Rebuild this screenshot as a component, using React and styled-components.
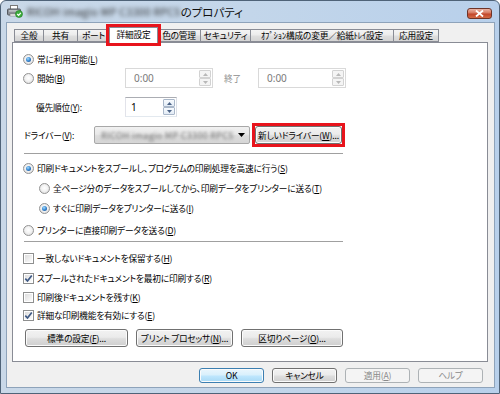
import React from 'react';
import styled, { createGlobalStyle } from 'styled-components';

const Global = createGlobalStyle`
  html, body { margin: 0; padding: 0; background: #fff; }
  body {
    font-family: "Noto Sans CJK JP", "Noto Sans", sans-serif;
    font-size: 8.7px;
    letter-spacing: -0.2px;
    color: #000;
    font-feature-settings: "palt";
  }
  * { box-sizing: border-box; }
  u { text-underline-offset: 1px; }
`;

const Window = styled.div`
  width: 500px;
  height: 394px;
  display: flex;
  flex-direction: column;
  background: linear-gradient(90deg, #c9d8e8 0%, #c3d6ea 50%, #b8d0eb 100%);
  border: 1px solid #4f6378;
  border-radius: 6px 6px 0 0;
  overflow: hidden;
`;

const TitleBar = styled.div`
  height: 21px;
  flex: none;
  display: flex;
  align-items: center;
  padding: 0 7px 0 6px;
`;

const TitleText = styled.div`
  flex: 1;
  margin-left: 4px;
  display: flex;
  align-items: center;
  white-space: nowrap;
  font-size: 11.5px;
  letter-spacing: 0;
  color: #111;
`;

const Blurred = styled.span`
  display: inline-block;
  filter: blur(${(p) => p.$blur || 1.8}px);
  color: ${(p) => p.$color || '#2a2a2a'};
  font-size: ${(p) => p.$size || 11}px;
  letter-spacing: ${(p) => p.$ls || 0}px;
  white-space: nowrap;
`;

const CloseBtn = styled.div`
  align-self: flex-start;
  margin-top: 7px;
  width: 25px;
  height: 11px;
  border: 1px solid #6e3428;
  border-radius: 3px;
  background: linear-gradient(180deg, #eab4a6 0%, #d6785f 45%, #c2452a 55%, #d36a45 100%);
  display: flex;
  align-items: center;
  justify-content: center;
`;

const Client = styled.div`
  flex: 1;
  margin: 0 4px 5px 5px;
  background: #f0f0f0;
  border: 1px solid #8ea3ba;
  display: flex;
  flex-direction: column;
  padding: 4px 6px 0 5px;
`;

const TabStrip = styled.div`
  height: 15px;
  flex: none;
  display: flex;
  align-items: flex-end;
  padding-left: 2px;
`;

const Tab = styled.div`
  width: ${(p) => p.$w}px;
  height: ${(p) => (p.$active ? 16 : 13)}px;
  margin-left: -1px;
  margin-bottom: ${(p) => (p.$active ? -1 : 0)}px;
  border: 1px solid #898c95;
  border-bottom: ${(p) => (p.$active ? 'none' : '1px solid #898c95')};
  background: ${(p) =>
    p.$active ? '#fff' : 'linear-gradient(180deg, #f4f4f4 0%, #ececec 45%, #dedede 55%, #d4d4d4 100%)'};
  display: flex;
  align-items: center;
  justify-content: center;
  padding-bottom: ${(p) => (p.$active ? 2 : 0)}px;
  white-space: nowrap;
  position: ${(p) => (p.$active ? 'relative' : 'static')};
  z-index: ${(p) => (p.$active ? 2 : 'auto')};
  &:first-child { margin-left: 0; }
  ${(p) =>
    p.$highlight &&
    `&::after {
      content: '';
      position: absolute;
      left: -4px; right: -4px; top: -4px; bottom: -3px;
      border: 3px solid #e8141c;
    }`}
`;

const Panel = styled.div`
  height: 320px;
  flex: none;
  background: #fff;
  border: 1px solid #898c95;
  display: flex;
  flex-direction: column;
  padding-top: 8px;
`;

const Row = styled.div`
  flex: none;
  display: flex;
  align-items: center;
  height: ${(p) => p.$h || 18}px;
  margin-top: ${(p) => p.$mt || 0}px;
  padding-left: ${(p) => p.$pl || 0}px;
  white-space: nowrap;
`;

const Separator = styled.div`
  flex: none;
  height: 1px;
  width: 319px;
  margin: ${(p) => p.$mt}px 0 0 11px;
  background: #a0a0a0;
`;

const RadioDot = styled.span`
  flex: none;
  width: 11px;
  height: 11px;
  margin-right: 3px;
  border-radius: 50%;
  border: 1px solid #939393;
  background: radial-gradient(circle at 50% 45%, #ffffff 0%, #f3f3f3 45%, #d2d2d2 100%);
  display: flex;
  align-items: center;
  justify-content: center;
  &::after {
    content: '';
    display: ${(p) => (p.$on ? 'block' : 'none')};
    width: 5px;
    height: 5px;
    border-radius: 50%;
    background: radial-gradient(circle at 40% 35%, #a8dcfa 0%, #3f8fd8 45%, #0f3f80 100%);
  }
`;

const CheckBox = styled.span`
  flex: none;
  width: 11px;
  height: 11px;
  margin-right: 3px;
  border: 1px solid #8e8f8f;
  background: linear-gradient(135deg, #d9d9d9 0%, #f4f4f4 70%, #ffffff 100%);
  box-shadow: inset 0 0 0 1px #fff;
  display: flex;
  align-items: center;
  justify-content: center;
`;

const Label = styled.span`
  display: inline-block;
  width: ${(p) => (p.$w ? `${p.$w}px` : 'auto')};
  margin-left: ${(p) => p.$ml || 0}px;
  color: ${(p) => (p.$disabled ? '#8d8d8d' : '#000')};
  flex: none;
`;

const Field = styled.div`
  flex: none;
  width: ${(p) => p.$w}px;
  height: ${(p) => p.$h || 20}px;
  background: #fff;
  border: 1px solid;
  border-color: ${(p) => (p.$disabled ? '#d9d9d9' : '#abadb3 #dbdfe6 #e3e9ef #e2e3ea')};
  display: flex;
  align-items: center;
  padding: 0 1px 0 ${(p) => p.$pad || 7}px;
  color: ${(p) => (p.$disabled ? '#7a7a7a' : '#000')};
  font-family: "Noto Sans", "Liberation Sans", sans-serif;
  font-size: 10px;
  letter-spacing: 0;
`;

const Spin = styled.div`
  margin-left: auto;
  display: flex;
  flex-direction: column;
`;

const SpinBtn = styled.span`
  width: 12px;
  height: 8px;
  border: 1px solid ${(p) => (p.$disabled ? '#d2d2d2' : '#a9b7c9')};
  border-radius: 1px;
  background: ${(p) => (p.$disabled ? '#f4f4f4' : 'linear-gradient(180deg, #f8fbfe, #e2ebf5)')};
  display: flex;
  align-items: center;
  justify-content: center;
`;

const Combo = styled.div`
  flex: none;
  width: 156px;
  height: 18px;
  border: 1px solid #a8a8a8;
  border-radius: 2px;
  background: linear-gradient(180deg, #f1f1f1 0%, #e8e8e8 45%, #dcdcdc 55%, #d6d6d6 100%);
  display: flex;
  align-items: center;
  padding: 0 4px 0 6px;
  overflow: hidden;
`;

const RedBox = styled.div`
  flex: none;
  margin-left: 2px;
  border: 3px solid #e8141c;
  display: flex;
`;

const Button = styled.div`
  flex: none;
  width: ${(p) => p.$w}px;
  height: ${(p) => p.$h || 18}px;
  border: 1px solid ${(p) => (p.$disabled ? '#adb2b5' : p.$default ? '#3c7fb1' : '#707070')};
  border-radius: 3px;
  background: ${(p) =>
    p.$disabled
      ? '#f4f4f4'
      : p.$default
      ? 'linear-gradient(180deg, #eaf6fd 0%, #d9f0fc 45%, #bee6fd 55%, #a7d9f5 100%)'
      : 'linear-gradient(180deg, #f2f2f2 0%, #ebebeb 45%, #dddddd 55%, #cfcfcf 100%)'};
  box-shadow: inset 0 0 0 1px ${(p) => (p.$disabled ? '#f4f4f4' : '#fbfbfb')};
  color: ${(p) => (p.$disabled ? '#8a8a8a' : '#000')};
  display: flex;
  align-items: center;
  justify-content: center;
  white-space: nowrap;
`;

const ButtonRow = styled.div`
  flex: none;
  display: flex;
  gap: 8px;
  margin-top: ${(p) => p.$mt}px;
  padding-left: 12px;
`;

const Footer = styled.div`
  flex: none;
  display: flex;
  justify-content: flex-end;
  gap: 8px;
  padding: 6px 5px 0 0;
`;

const Arrow = ({ up, color }) => (
  <svg width="5" height="3" viewBox="0 0 5 3">
    <path d={up ? 'M0 3 L2.5 0 L5 3 Z' : 'M0 0 L5 0 L2.5 3 Z'} fill={color} />
  </svg>
);

const SpinBox = ({ disabled }) => {
  const c = disabled ? '#b8b8b8' : '#4a6286';
  return (
    <Spin>
      <SpinBtn $disabled={disabled}><Arrow up color={c} /></SpinBtn>
      <SpinBtn $disabled={disabled}><Arrow color={c} /></SpinBtn>
    </Spin>
  );
};

const Check = () => (
  <svg width="9" height="9" viewBox="0 0 9 9">
    <path d="M1.3 4.6 L3.5 7 L7.8 1.4" fill="none" stroke="#3f5a85" strokeWidth="1.7" />
  </svg>
);

const Radio = ({ on, pl, mt, children }) => (
  <Row $pl={pl} $mt={mt}>
    <RadioDot $on={on} />
    <Label>{children}</Label>
  </Row>
);

const Checkbox = ({ on, mt, children }) => (
  <Row $pl={10} $mt={mt}>
    <CheckBox>{on && <Check />}</CheckBox>
    <Label>{children}</Label>
  </Row>
);

const PrinterIcon = () => (
  <svg width="16" height="13" viewBox="0 0 16 13">
    <rect x="3.5" y="0.5" width="7" height="4" fill="#fff" stroke="#7a7a7a" />
    <rect x="0.5" y="4" width="13" height="6" rx="1" fill="#8b8f95" stroke="#55595f" />
    <rect x="2" y="5.2" width="10" height="1.4" fill="#c9ccd0" />
    <rect x="3" y="9" width="8" height="2" fill="#fff" stroke="#7a7a7a" strokeWidth="0.6" />
    <circle cx="12" cy="9" r="3.5" fill="#3cae3c" stroke="#1f7a1f" strokeWidth="0.6" />
    <path d="M10.2 9 L11.6 10.4 L13.8 7.8" fill="none" stroke="#fff" strokeWidth="1.2" />
  </svg>
);

const tabs = [
  { t: '全般', w: 30 },
  { t: '共有', w: 35 },
  { t: 'ポート', w: 33 },
  { t: '詳細設定', w: 49, active: true },
  { t: '色の管理', w: 44 },
  { t: 'セキュリティ', w: 51 },
  { t: 'ｵﾌﾟｼｮﾝ構成の変更／給紙ﾄﾚｲ設定', w: 144 },
  { t: '応用設定', w: 46 },
];

export default function App() {
  return (
    <>
      <Global />
      <Window>
        <TitleBar>
          <PrinterIcon />
          <TitleText>
            <Blurred $size={10.5} $ls={0.3} $blur={2}>RICOH imagio MP C3300 RPCS</Blurred>
            <span>のプロパティ</span>
          </TitleText>
          <CloseBtn>
            <svg width="9" height="7" viewBox="0 0 9 7">
              <path d="M1 0.5 L8 6.5 M8 0.5 L1 6.5" stroke="#fff" strokeWidth="1.8" />
            </svg>
          </CloseBtn>
        </TitleBar>
        <Client>
          <TabStrip>
            {tabs.map((tb) => (
              <Tab key={tb.t} $w={tb.w} $active={tb.active} $highlight={tb.active}>
                {tb.t}
              </Tab>
            ))}
          </TabStrip>
          <Panel>
            <Row $h={17} $pl={10}>
              <RadioDot $on />
              <Label>常に利用可能(<u>L</u>)</Label>
            </Row>
            <Row $h={20} $pl={10}>
              <RadioDot />
              <Label $w={88}>開始(<u>B</u>)</Label>
              <Field $w={88} $disabled $pad={8}>
                0:00
                <SpinBox disabled />
              </Field>
              <Label $w={34} $ml={11} $disabled>終了</Label>
              <Field $w={88} $disabled $pad={8}>
                0:00
                <SpinBox disabled />
              </Field>
            </Row>
            <Row $h={20} $mt={9} $pl={23}>
              <Label $w={89}>優先順位(<u>Y</u>):</Label>
              <Field $w={52} $pad={5}>
                1
                <SpinBox />
              </Field>
            </Row>
            <Row $h={24} $mt={6} $pl={11}>
              <Label $w={70}>ドライバー(<u>V</u>):</Label>
              <Combo>
                <Blurred $size={9} $color="#707070" $ls={0.3} $blur={1.6}>RICOH imagio MP C3300 RPCS</Blurred>
                <svg width="7" height="4" viewBox="0 0 7 4" style={{ marginLeft: 'auto', flex: 'none' }}>
                  <path d="M0 0 L7 0 L3.5 4 Z" fill="#000" />
                </svg>
              </Combo>
              <RedBox>
                <Button $w={87} $h={18}>新しいドライバー(<u>W</u>)...</Button>
              </RedBox>
            </Row>
            <Separator $mt={6} />
            <Radio on pl={10} mt={5}>印刷ドキュメントをスプールし、プログラムの印刷処理を高速に行う(<u>S</u>)</Radio>
            <Radio pl={26} mt={2}>全ページ分のデータをスプールしてから、印刷データをプリンターに送る(<u>T</u>)</Radio>
            <Radio on pl={26} mt={2}>すぐに印刷データをプリンターに送る(<u>I</u>)</Radio>
            <Radio pl={10} mt={4}>プリンターに直接印刷データを送る(<u>D</u>)</Radio>
            <Separator $mt={2} />
            <Checkbox mt={7}>一致しないドキュメントを保留する(<u>H</u>)</Checkbox>
            <Checkbox on mt={2}>スプールされたドキュメントを最初に印刷する(<u>R</u>)</Checkbox>
            <Checkbox mt={1}>印刷後ドキュメントを残す(<u>K</u>)</Checkbox>
            <Checkbox on mt={0}>詳細な印刷機能を有効にする(<u>E</u>)</Checkbox>
            <ButtonRow $mt={5}>
              <Button $w={103}>標準の設定(<u>F</u>)...</Button>
              <Button $w={97}>プリント プロセッサ(<u>N</u>)...</Button>
              <Button $w={102}>区切りページ(<u>O</u>)...</Button>
            </ButtonRow>
          </Panel>
          <Footer>
            <Button $w={65} $h={15} $default>OK</Button>
            <Button $w={65} $h={15}>キャンセル</Button>
            <Button $w={65} $h={15} $disabled>適用(<u>A</u>)</Button>
            <Button $w={65} $h={15} $disabled>ヘルプ</Button>
          </Footer>
        </Client>
      </Window>
    </>
  );
}
